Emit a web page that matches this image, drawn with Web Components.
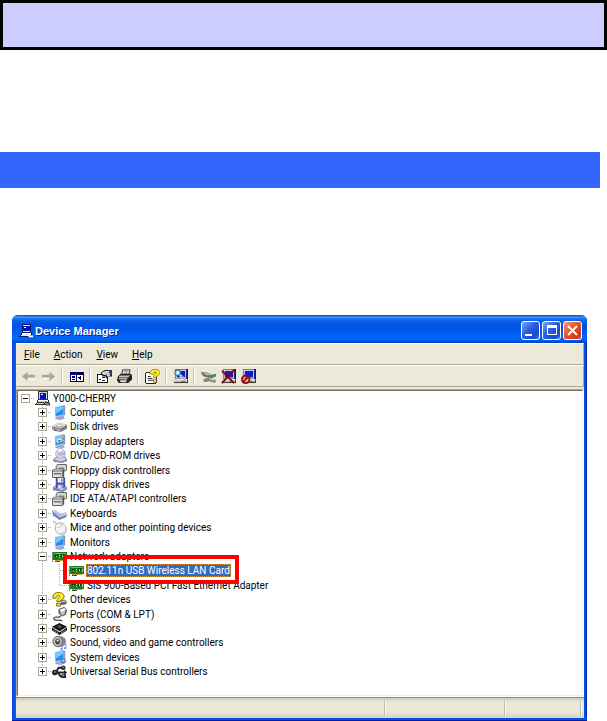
<!DOCTYPE html>
<html lang="en">
<head>
<meta charset="utf-8">
<title>Device Manager</title>
<style>
    body {
        margin: 0;
        background: #fff;
        color: #000;
        font-family: Roboto, "Liberation Sans", sans-serif;
        font-size: 10px;
    }

    section-bar {
        margin: 102px 7px 127px 0;
    }

    app-window {
        margin: 0 20px 0 12px;
    }
</style>
</head>
<body>
<page-banner></page-banner>
<section-bar></section-bar>
<app-window>
    <title-bar slot="title">Device Manager</title-bar>
    <menu-bar slot="menu"></menu-bar>
    <tool-bar slot="tools"></tool-bar>
    <device-tree></device-tree>
    <status-bar slot="status"></status-bar>
</app-window>

<script>
    const monitor = `
        <path d="M3 14l4-2 5 1 2 1-5 2-5-1z" fill="#8f98c8"/>
        <path d="M6 14l3-1 3 1-3 1z" fill="#e6e9f6"/>
        <path d="M8 10h4l1 4-4 1-2-1z" fill="#9aa4d6"/>
        <path d="M3 2l9-2 2 1v10l-9 2-2-1z" fill="#b4cce6"/>
        <path d="M4 3l8-2v9l-8 2z" fill="#2b8ce6"/>
        <path d="M4 3l8-2v3L4 9z" fill="#74c8ff"/>
        <path d="M12 0l2 1v10l-2 0z" fill="#8098c8"/>`;

    const drives = `
        <path d="M4 3l2-2h9l1 1v6l-2 1H4z" fill="#666"/>
        <path d="M5 3h10v5H5z" fill="#d8d8d8"/>
        <path d="M5 3l1-1h9l-1 1z" fill="#f4f4f4"/>
        <path d="M7 5h6v1H7z" fill="#555"/>
        <path d="M13 7h1v1h-1z" fill="#18b818"/>
        <path d="M0 8l2-2h10l1 1v7l-2 2H1l-1-1z" fill="#555"/>
        <path d="M1 9h10v6H1z" fill="#e0e0e0"/>
        <path d="M1 8l1-1h10l-1 1z" fill="#fff"/>
        <path d="M2 11h8v1H2z" fill="#333"/>
        <path d="M9 13h1v1H9z" fill="#18b818"/>`;

    const desktopPc = (body, line) => `
        <path d="M3 0h11v10H3z" fill="${line}"/>
        <path d="M4 1h9v8H4z" fill="${body}"/>
        <path d="M5 2h7v6H5z" fill="#0010c8"/>
        <path d="M6 3h2v1H6z" fill="#fff"/>
        <path d="M2 10h13v3H2z" fill="${line}"/>
        <path d="M3 10h11v2H3z" fill="${body}"/>
        <path d="M3 10h11v1H3z" fill="#fff"/>
        <path d="M1 13h12v2H0v-1h1z" fill="${line}"/>
        <path d="M2 13h10v1H2z" fill="${body}"/>`;

    const toolPc = `
        <path d="M2 0h13v11H2z" fill="#77777f"/>
        <path d="M3 1h11v9H3z" fill="#e4e2da"/>
        <path d="M4 2h9v7H4z" fill="#0a1ed8"/>
        <path d="M14 0h2v11h-2z" fill="#0b1790"/>
        <path d="M1 11h15v4H1z" fill="#333"/>
        <path d="M1 11h14v3H1z" fill="#c4c1b8"/>
        <path d="M1 11h14v1H1z" fill="#fff"/>
        <path d="M9 13h4v1H9z" fill="#555"/>`;

    const icons = {
        computer: `
            <g shape-rendering="crispEdges">${desktopPc('#d6d3c6', '#333')}</g>
            <path d="M10 12l2 2h4" fill="none" stroke="#222" stroke-width="3"/>
            <path d="M10 12l2 2h3" fill="none" stroke="#eee"/>`,
        titlePc: `
            <g shape-rendering="crispEdges">${desktopPc('#e8e6dc', '#08185c')}</g>
            <path d="M10 12l2 2h4" fill="none" stroke="#fff" stroke-width="2"/>`,
        monitor,
        system: monitor + '<path d="M10 10l4-1 1 4-3 2-3-2z" fill="#6f7bc0"/><path d="M11 11h2v1h-2z" fill="#fff"/>',
        disk: `
            <path d="M0 8l7-4 9 2v4l-7 4-9-3z" fill="#777"/>
            <path d="M0 8l7-4 9 2-7 4z" fill="#dcdcdc"/>
            <path d="M4 8c0-2 6-3 7-1S5 10 4 8z" fill="#aaa"/>
            <path d="M5 7l4-1 1 1-3 1z" fill="#fff"/>
            <path d="M0 9l9 2v3l-9-3z" fill="#a5a5a5"/>
            <path d="M2 11l3 1v1l-3-1z" fill="#333"/>`,
        display: monitor + `
            <path d="M5 6l6-2 1 3-6 3z" fill="#e6eef8"/>
            <path d="M6 7l4-1v1L7 9z" fill="#3f8b50"/>
            <path d="M10 4l2 1-1 2z" fill="#d04b3f"/>`,
        cdrom: `
            <path d="M1 12l4-3h9l2 3v2l-5 2-9-1z" fill="#8a8ea8"/>
            <path d="M2 12l4-2h7l2 2-5 2z" fill="#d6d8e2"/>
            <circle cx="9" cy="6" r="5" fill="#d0d4ee" stroke="#a2a6c4"/>
            <path d="M9 6L6 2A5 5 0 0 1 11 1z" fill="#fff"/>
            <path d="M9 6l5-2a5 5 0 0 1 0 4z" fill="#9cbcf6"/>
            <path d="M9 6l-4 3a5 5 0 0 1-1-4z" fill="#eec9ec"/>
            <circle cx="9" cy="6" r="1.5" fill="#fff" stroke="#7b80b5"/>`,
        drives,
        floppy: `
            <path d="M1 11l4-3h8l3 3v2l-4 3-11-2z" fill="#8084a0"/>
            <path d="M2 11l4-2h7l2 2-4 3z" fill="#d6d8e2"/>
            <path d="M4 0h9l1 1v10l-2 1H4z" fill="#4650a0"/>
            <path d="M6 1h6v5H6z" fill="#e7ebf9"/>
            <path d="M10 2h1v3h-1z" fill="#363e8c"/>
            <path d="M6 8h6v4H6z" fill="#9ba4e0"/>
            <path d="M7 9h2v3H7z" fill="#fff"/>`,
        keyboard: `
            <path d="M0 5l3-1 6 4 6-1 1 2-1 3-7 3-7-5z" fill="#7c82ba"/>
            <path d="M0 5l3-1 6 4 6-1 1 2-8 3z" fill="#d2d5f5"/>
            <path d="M3 6l6 4M2 7l6 4M8 10l6-2" stroke="#9ca0d6" stroke-width=".7"/>`,
        mouse: `
            <path d="M1 1l4 3" stroke="#888" fill="none"/>
            <path d="M5 4c3-2 6-1 8 1 3 3 3 6 1 9-3 2-7 2-9-1-2-2-2-7 0-9z" fill="#f6f6f6" stroke="#aaa"/>
            <path d="M5 8c3 0 6-1 7-4M9 3l1 3" fill="none" stroke="#bbb" stroke-width=".8"/>
            <path d="M8 14c4 1 7-2 6-6" fill="none" stroke="#ccc"/>`,
        network: `
            <g shape-rendering="crispEdges">
                <path d="M0 3h1v11H0z" fill="#888"/>
                <path d="M1 3h15v9H1z" fill="#1c7a22"/>
                <path d="M2 4h13v1H2z" fill="#6cba4c"/>
                <path d="M3 6h3v3H3zM10 5h3v4h-3z" fill="#0b3e0e"/>
                <path d="M4 7h1v1H4zM11 6h1v2h-1zM7 6h2v1H7zM7 8h1v2H7zM14 6h1v4h-1z" fill="#a6dc70"/>
                <path d="M3 12h5v1H3zM9 12h5v1H9z" fill="#c5a52c"/>
                <path d="M3 13h5v1H3zM8 10h1v3H8z" fill="#444"/>
            </g>`,
        other: `
            <path d="M1 5c0-6 12-6 12 0 0 3-4 3-4 5H5c0-3 3-3 3-5 0-2-3-2-3 1L1 7z" fill="#ffed1c" stroke="#706800"/>
            <path d="M5 12h4v3H5z" fill="#ffed1c" stroke="#706800"/>
            <path d="M9 9l4-1 3 2-1 3-5 1z" fill="#666"/>
            <path d="M10 10l3-1 2 1-4 1z" fill="#ddd"/>`,
        ports: `
            <path d="M7 2l6-2 3 3-1 5-4 2-4-3z" fill="#555"/>
            <path d="M8 3l5-2 2 2-5 3z" fill="#fff"/>
            <path d="M8 6l6-2v3l-3 2z" fill="#c4c4c4"/>
            <path d="M9 9c0 3-4 1-6 2s-1 3 2 3 5 0 6 1" fill="none" stroke="#444" stroke-width="1.3"/>`,
        processor: `
            <path d="M0 6l8-4 8 4-8 5z" fill="#151515"/>
            <path d="M5 6l3-2 3 2-3 2z" fill="#555"/>
            <path d="M0 7l8 5 8-5v3l-8 5-8-5z" fill="#111"/>
            <path d="M2 9v3M4 10v3M6 11v3M10 11v3M12 10v3M14 9v3" stroke="#aaa" stroke-width=".8"/>`,
        sound: `
            <ellipse cx="8" cy="7" rx="7" ry="6" fill="#8a8a8a"/>
            <ellipse cx="6" cy="7" rx="5" ry="5.5" fill="#bbb" stroke="#666"/>
            <ellipse cx="6" cy="7" rx="2.5" ry="3" fill="#444"/>
            <path d="M5 5h2v2H5z" fill="#eee"/>
            <path d="M11 15v-4l4-1v4" fill="none" stroke="#8794f0"/>
            <path d="M9 14h2v2H9zM13 13h2v2h-2z" fill="#6b7be2"/>`,
        usb: `
            <path d="M1 9h13M4 9l3-5h4M6 9l3 4h3" fill="none" stroke="#222" stroke-width="2"/>
            <circle cx="3" cy="9" r="3" fill="#222"/>
            <circle cx="12" cy="4" r="2.5" fill="#222"/>
            <path d="M10 11h5v4h-5z" fill="#222"/>
            <path d="M13 6l3 3-3 3z" fill="#222"/>
            <path d="M2 8h2v1H2zM11 3h2v1h-2zM11 12h2v1h-2z" fill="#bbb"/>`,
        back: '<path d="M2 9l5 4v-2h9V8" fill="none" stroke="#fff"/><path d="M1 8l6-5v3h8v3H7v4z" fill="#aca899"/>',
        forward: '<path d="M15 9l-5 5M2 10h8" fill="none" stroke="#fff"/><path d="M15 8L9 3v3H1v3h8v4z" fill="#aca899"/>',
        panes: `
            <g shape-rendering="crispEdges">
                <path d="M1 3h15v11H1z" fill="#00006e"/>
                <path d="M2 6h5v7H2zM8 6h7v7H8z" fill="#fff"/>
                <path d="M3 7h3v1H3zM3 9h3v1H3zM3 11h3v1H3z" fill="#00006e"/>
                <path d="M10 9h1v-1h1v-1h1v5h-1v-1h-1v-1h-1z" fill="#000"/>
            </g>`,
        properties: `
            <g shape-rendering="crispEdges">
                <path d="M0 5h12v10H0z" fill="#111"/>
                <path d="M1 6h10v8H1z" fill="#fff"/>
                <path d="M2 8h2v1H2zM5 9h4v1H5zM2 11h2v1H2zM5 12h4v1H5z" fill="#222"/>
            </g>
            <path d="M4 4l4-3h5l3 1v6h-4l-2 2-1-2H6z" fill="#222"/>
            <path d="M5 4l4-2h4l1 5-3 1-1-2H7z" fill="#efeeee"/>
            <path d="M8 4h5M9 6h4" stroke="#777" stroke-width=".7"/>
            <path d="M13 1h3v6h-2z" fill="#27318c"/>`,
        print: `
            <path d="M5 6l1-5h8l-2 6z" fill="#fff" stroke="#222"/>
            <path d="M7 3h5M7 5h4" stroke="#555" stroke-width=".8"/>
            <path d="M1 8l3-3h11l1 2v4l-4 4H2l-2-3z" fill="#222"/>
            <path d="M2 8l2-1h8l2-1-2 3H2z" fill="#c9c6b9"/>
            <path d="M2 10h9v1H2z" fill="#fff"/>
            <path d="M3 12h7v2H4z" fill="#ddd"/>
            <path d="M8 11h2v1H8z" fill="#c8c800"/>`,
        help: `
            <path d="M1 4h11v11H1z" fill="#fff" stroke="#111" shape-rendering="crispEdges"/>
            <path d="M3 8h3M3 10h5M3 12h6" stroke="#222"/>
            <path d="M5 5c0-6 11-6 11-1 0 3-4 3-4 5H9c0-3 3-3 3-5 0-1-3-1-3 2z" fill="#ffef20" stroke="#807000" stroke-width=".8"/>
            <path d="M9 11h3v3H9z" fill="#ffef20" stroke="#807000" stroke-width=".8"/>`,
        scan: toolPc + `
            <path d="M7 6l6 6" stroke="#eee" stroke-width="2.4"/>
            <path d="M8 7l5 5" stroke="#267c9c"/>
            <circle cx="5" cy="4" r="3" fill="#a2eaff" stroke="#1c4f85"/>
            <path d="M4 3h2v2H4z" fill="#fff"/>`,
        update: `
            <path d="M0 3l7 1 4 2 5-1v3l-6 2-7-2-2-2z" fill="#6b786b"/>
            <path d="M2 4l5 1 4 2-5-1z" fill="#e8ece0"/>
            <path d="M4 10l6-1 6 3-1 3-6-2-5 1-2-2z" fill="#808a80"/>
            <path d="M9 10l5 2" stroke="#fff"/>
            <path d="M8 7h4v1H8z" fill="#20a028"/>`,
        uninstall: toolPc + '<path d="M1 2l13 13M14 1L1 15" stroke="#8b0000" stroke-width="2"/>',
        disable: toolPc + `
            <circle cx="5" cy="11" r="4" fill="none" stroke="#a00808" stroke-width="2"/>
            <path d="M2 14l6-6" stroke="#a00808" stroke-width="2"/>`
    };

    const svg = (name, size) =>
        `<svg width="${size}" height="${size}" viewBox="0 0 16 16" aria-hidden="true">${icons[name]}</svg>`;

    class PageBanner extends HTMLElement {
        constructor() {
            super();
            this.attachShadow({ mode: 'open' }).innerHTML = `
                <style>
                    :host {
                        display: block;
                        box-sizing: border-box;
                        min-height: 50px;
                        border: 3px solid #000;
                        background: #ccf;
                    }
                </style>
                <slot></slot>
            `;
        }
    }

    class SectionBar extends HTMLElement {
        constructor() {
            super();
            this.attachShadow({ mode: 'open' }).innerHTML = `
                <style>
                    :host {
                        display: block;
                        min-height: 36px;
                        background: #36f;
                    }
                </style>
                <slot></slot>
            `;
        }
    }

    class AppWindow extends HTMLElement {
        constructor() {
            super();
            this.attachShadow({ mode: 'open' }).innerHTML = `
                <style>
                    :host {
                        display: block;
                        border-radius: 6px 6px 0 0;
                        background: linear-gradient(90deg, #0831d9, #0a5bf0 2px, #0650e8 50%, #0a50f0 calc(100% - 2px), #001ea0);
                        border-bottom: 1px solid #001ea0;
                    }

                    .body {
                        margin: 0 3px 0 4px;
                        background: #ece9d8;
                    }

                    .edge {
                        height: 2px;
                        background: #0650e8;
                    }
                </style>
                <slot name="title"></slot>
                <div class="body">
                    <slot name="menu"></slot>
                    <slot name="tools"></slot>
                    <slot></slot>
                    <slot name="status"></slot>
                </div>
                <div class="edge"></div>
            `;
        }
    }

    class TitleBar extends HTMLElement {
        constructor() {
            super();
            this.attachShadow({ mode: 'open' }).innerHTML = `
                <style>
                    :host {
                        display: flex;
                        align-items: center;
                        box-sizing: border-box;
                        height: 28px;
                        padding: 3px 5px 0 7px;
                        border-radius: 6px 6px 0 0;
                        background: linear-gradient(#0a45c8, #3b92fb 2px, #0a62ee 5px, #0054e3 10px, #0058ea 16px, #0066fc 22px, #0062f4 25px, #0040c0 28px);
                        color: #fff;
                        font: bold 11px/16px "Liberation Sans", sans-serif;
                        text-shadow: 1px 1px #0b2a8c;
                    }

                    h1 {
                        flex: 1;
                        margin: 0 0 0 2px;
                        font: inherit;
                    }

                    .controls {
                        display: flex;
                        gap: 2px;
                    }

                    button {
                        display: flex;
                        box-sizing: border-box;
                        width: 19px;
                        height: 19px;
                        padding: 0;
                        border: 1px solid #fff;
                        border-radius: 3px;
                        background: linear-gradient(135deg, #7da5f5, #2a5be0 45%, #1b48cc 80%, #3f7af5);
                    }

                    .close {
                        background: linear-gradient(135deg, #f0a084, #e2532b 45%, #c8381a 85%, #e0603a);
                    }
                </style>
                ${svg('titlePc', 14)}
                <h1><slot></slot></h1>
                <div class="controls">
                    <button aria-label="Minimize"><svg width="17" height="17"><path d="M3 12h7v2H3z" fill="#fff"/></svg></button>
                    <button aria-label="Maximize"><svg width="17" height="17"><path d="M4 3h10v10H4zM5 6v6h8V6z" fill="#fff" fill-rule="evenodd"/></svg></button>
                    <button class="close" aria-label="Close"><svg width="17" height="17"><path d="M4 4l9 9M13 4l-9 9" stroke="#fff" stroke-width="2"/></svg></button>
                </div>
            `;
        }
    }

    class MenuBar extends HTMLElement {
        constructor() {
            super();
            this.attachShadow({ mode: 'open' }).innerHTML = `
                <style>
                    :host {
                        display: flex;
                        box-sizing: border-box;
                        height: 22px;
                        padding-left: 1px;
                        border-top: 1px solid #fff;
                        border-bottom: 1px solid #aca899;
                        border-right: 1px solid #aca899;
                    }

                    button {
                        padding: 0 7px;
                        border: 0;
                        background: none;
                        color: inherit;
                        font: inherit;
                    }
                </style>
            `;
        }

        connectedCallback() {
            ['File', 'Action', 'View', 'Help'].forEach(name => {
                const button = document.createElement('button');
                button.innerHTML = `<u>${name[0]}</u>${name.slice(1)}`;
                this.shadowRoot.appendChild(button);
            });
        }
    }

    class ToolBar extends HTMLElement {
        constructor() {
            super();
            this.attachShadow({ mode: 'open' }).innerHTML = `
                <style>
                    :host {
                        display: flex;
                        align-items: center;
                        box-sizing: border-box;
                        height: 22px;
                        padding-left: 2px;
                        border-top: 1px solid #fff;
                        border-bottom: 1px solid #aca899;
                        border-right: 1px solid #aca899;
                    }

                    button {
                        display: flex;
                        justify-content: center;
                        width: 20px;
                        padding: 0;
                        border: 0;
                        background: none;
                    }

                    i {
                        width: 1px;
                        height: 18px;
                        margin: 0 3px;
                        background: #c5c2b2;
                        border-right: 1px solid #fff;
                    }
                </style>
            `;
        }

        connectedCallback() {
            const groups = [
                [['back', 'Back'], ['forward', 'Forward']],
                [['panes', 'Show/Hide Console Tree']],
                [['properties', 'Properties'], ['print', 'Print']],
                [['help', 'Help']],
                [['scan', 'Scan for hardware changes']],
                [['update', 'Update Driver'], ['uninstall', 'Uninstall'], ['disable', 'Disable']]
            ];
            const html = groups.map(group => group.map(([icon, label]) =>
                `<button aria-label="${label}">${svg(icon, 15)}</button>`).join(''));
            this.shadowRoot.innerHTML += html.join('<i></i>');
        }
    }

    class TreeRow extends HTMLElement {
        constructor() {
            super();
            this.attachShadow({ mode: 'open' });
        }

        connectedCallback() {
            const level = Number(this.getAttribute('level'));
            const icon = this.getAttribute('icon');
            const open = this.hasAttribute('open');
            const last = this.hasAttribute('last');
            const expander = level < 2
                ? `<button aria-label="${open ? 'Collapse' : 'Expand'}"><svg width="7" height="7"><path d="${open ? 'M1 3h5v1H1z' : 'M1 3h5v1H1zM3 1h1v5H3z'}"/></svg></button>`
                : '';

            this.shadowRoot.innerHTML = `
                <style>
                    :host {
                        position: relative;
                        display: flex;
                        align-items: center;
                        min-height: 14px;
                        padding-left: 20px;
                        white-space: nowrap;
                    }

                    :host([level="0"]) {
                        padding-left: 3px;
                    }

                    .guide, .node {
                        --dots: repeating-linear-gradient(#aaa 0 1px, transparent 1px 2px);
                        align-self: stretch;
                        flex: none;
                        background: var(--dots) 4px 0 / 1px 100% no-repeat;
                    }

                    .guide {
                        width: 17px;
                    }

                    .node {
                        display: flex;
                        align-items: center;
                        width: 14px;
                    }

                    .node.root {
                        background: none;
                    }

                    .node.last {
                        background-size: 1px 50%;
                    }

                    .node::after {
                        content: "";
                        flex: 1;
                        height: 1px;
                        margin-left: 1px;
                        background: repeating-linear-gradient(90deg, #aaa 0 1px, transparent 1px 2px);
                    }

                    .node.leaf::after {
                        margin-left: 5px;
                    }

                    button {
                        display: flex;
                        box-sizing: border-box;
                        width: 9px;
                        height: 9px;
                        padding: 0;
                        border: 1px solid #aca899;
                        background: #fff;
                    }

                    svg {
                        flex: none;
                    }

                    /* icons are a little taller than the row and may touch */
                    :host > svg, .icon {
                        display: flex;
                        align-items: center;
                        height: 14px;
                    }

                    .label {
                        margin-left: 2px;
                        padding: 0 1px;
                        line-height: 13px;
                    }

                    :host([selected]) .label {
                        background: #316ac5;
                        color: #fff;
                        outline: 1px dotted #e09a3a;
                        outline-offset: -1px;
                    }

                    .mark {
                        position: absolute;
                        top: -9px;
                        bottom: -6px;
                        left: 45px;
                        width: 168px;
                        border: 4px solid #f00;
                        z-index: 1;
                    }
                </style>
                ${level === 2 ? '<span class="guide"></span>' : ''}
                <span class="node ${level === 0 ? 'root' : ''} ${level === 2 ? 'leaf' : ''} ${last ? 'last' : ''}">${expander}</span>
                <span class="icon">${svg(icon, 15)}</span>
                <span class="label"><slot></slot></span>
                ${this.hasAttribute('selected') ? '<span class="mark"></span>' : ''}
            `;
        }
    }

    class DeviceTree extends HTMLElement {
        constructor() {
            super();
            this.attachShadow({ mode: 'open' }).innerHTML = `
                <style>
                    :host {
                        display: block;
                        margin-top: 2px;
                        border: 1px solid #aca899;
                        border-right-color: #fff;
                        border-bottom-color: #fff;
                        background: #fff;
                    }

                    .rows {
                        display: grid;
                        grid-auto-rows: 1fr;
                        min-height: 288px;
                        padding-bottom: 16px;
                        border: 1px solid #716f64;
                        border-right-color: #f1efe2;
                        border-bottom-color: #f1efe2;
                    }
                </style>
                <div class="rows" role="tree" aria-label="Devices"></div>
            `;
        }

        connectedCallback() {
            const devices = [
                [0, 'computer', 'Y000-CHERRY', 'open'],
                [1, 'monitor', 'Computer'],
                [1, 'disk', 'Disk drives'],
                [1, 'display', 'Display adapters'],
                [1, 'cdrom', 'DVD/CD-ROM drives'],
                [1, 'drives', 'Floppy disk controllers'],
                [1, 'floppy', 'Floppy disk drives'],
                [1, 'drives', 'IDE ATA/ATAPI controllers'],
                [1, 'keyboard', 'Keyboards'],
                [1, 'mouse', 'Mice and other pointing devices'],
                [1, 'monitor', 'Monitors'],
                [1, 'network', 'Network adapters', 'open'],
                [2, 'network', '802.11n USB Wireless LAN Card', 'selected'],
                [2, 'network', 'SiS 900-Based PCI Fast Ethernet Adapter', 'last'],
                [1, 'other', 'Other devices'],
                [1, 'ports', 'Ports (COM &amp; LPT)'],
                [1, 'processor', 'Processors'],
                [1, 'sound', 'Sound, video and game controllers'],
                [1, 'system', 'System devices'],
                [1, 'usb', 'Universal Serial Bus controllers', 'last']
            ];
            // "last" on a nested row only ends its own guide line
            this.shadowRoot.querySelector('.rows').innerHTML = devices.map(([level, icon, name, state = '']) =>
                `<tree-row role="treeitem" aria-level="${level + 1}" level="${level}" icon="${icon}" ${state}>${name}</tree-row>`
            ).join('');
        }
    }

    class StatusBar extends HTMLElement {
        constructor() {
            super();
            this.attachShadow({ mode: 'open' }).innerHTML = `
                <style>
                    :host {
                        display: grid;
                        grid-template-columns: 1fr 120px 76px;
                        box-sizing: border-box;
                        height: 21px;
                        padding: 3px 3px 2px 0;
                        border-top: 1px solid #8f8c7e;
                        background: linear-gradient(#c9c6b6, #e6e3d3 3px, #ece9d8 6px, #ebe8d7 14px, #d6d2bb);
                    }

                    span {
                        border-right: 1px solid #b9b6a4;
                        box-shadow: 1px 0 #fff;
                    }
                </style>
                <span></span><span></span><span></span>
            `;
        }
    }

    customElements.define('page-banner', PageBanner);
    customElements.define('section-bar', SectionBar);
    customElements.define('title-bar', TitleBar);
    customElements.define('menu-bar', MenuBar);
    customElements.define('tool-bar', ToolBar);
    customElements.define('tree-row', TreeRow);
    customElements.define('device-tree', DeviceTree);
    customElements.define('status-bar', StatusBar);
    customElements.define('app-window', AppWindow);
</script>
</body>
</html>
